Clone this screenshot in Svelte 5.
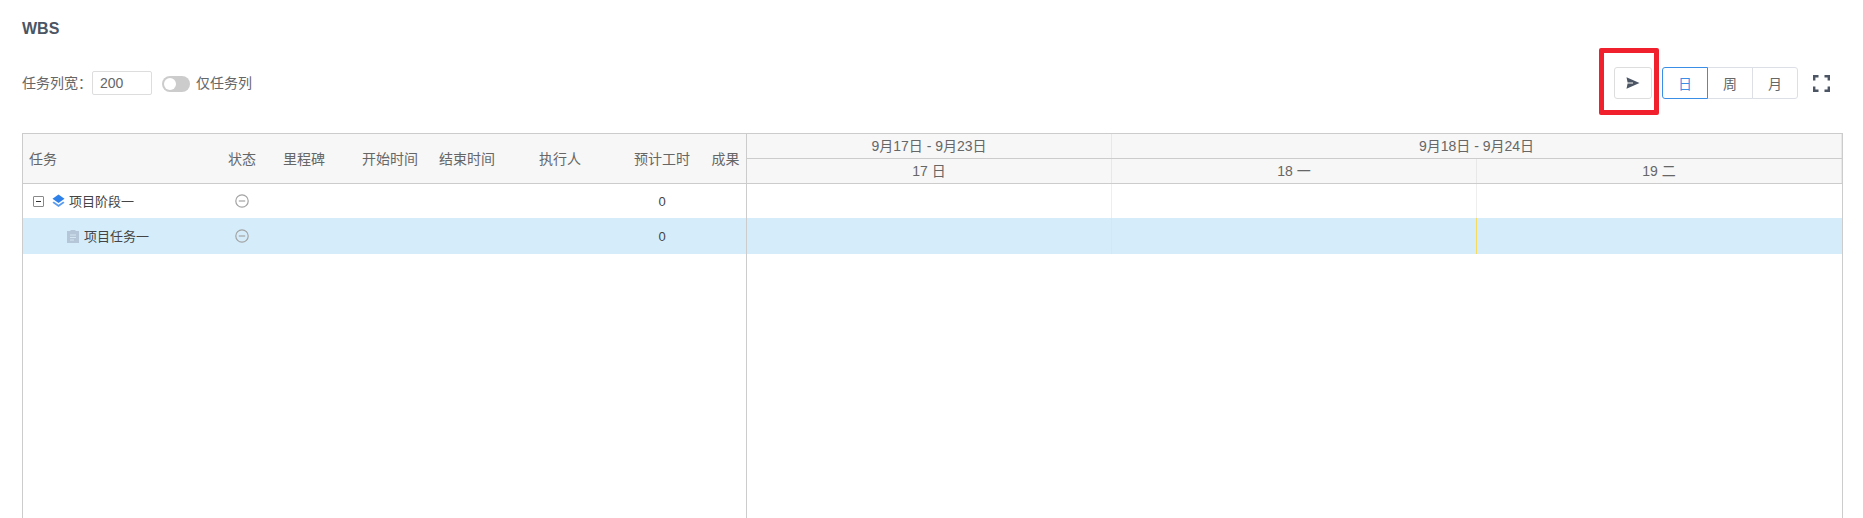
<script lang="ts">
  const columns = [
    { label: "任务", width: 201, align: "left" },
    { label: "状态", width: 36 },
    { label: "里程碑", width: 88 },
    { label: "开始时间", width: 84 },
    { label: "结束时间", width: 70 },
    { label: "执行人", width: 116 },
    { label: "预计工时", width: 88 },
    { label: "成果", width: 39 },
  ];

  const rows = [
    { name: "项目阶段一", type: "stage", hours: 0 },
    { name: "项目任务一", type: "task", hours: 0, selected: true },
  ];

  const weeks = ["9月17日 - 9月23日", "9月18日 - 9月24日"];
  const days = ["17 日", "18 一", "19 二"];
  const scales = ["日", "周", "月"];
</script>

<main class="page">
  <h1>WBS</h1>

  <div class="toolbar">
    <label class="field">
      <span>任务列宽：</span>
      <input value="200" />
    </label>
    <span class="switch"><i></i></span>
    <span class="switch-label">仅任务列</span>

    <div class="tools">
      <div class="marked">
        <button class="send" aria-label="发送">
          <svg width="14" height="12" viewBox="0 0 14 12"><path d="M0.5 0.3 13.5 6 0.5 11.7 1.6 6.5H7V5.5H1.6Z" fill="#4b5563" /></svg>
        </button>
      </div>
      <div class="scale">
        {#each scales as s, i}
          <button class:active={i === 0}>{s}</button>
        {/each}
      </div>
      <svg class="fullscreen" width="17" height="17" viewBox="0 0 17 17" fill="none" stroke="#4b5563" stroke-width="2.4">
        <path d="M1.2 5.5V1.2H5.5M11.5 1.2h4.3V5.5M15.8 11.5v4.3H11.5M5.5 15.8H1.2V11.5" />
      </svg>
    </div>
  </div>

  <div class="gantt">
    <div class="grid">
      <div class="grid-head">
        {#each columns as c}
          <div class="col" class:left={c.align === "left"} style:width="{c.width}px">{c.label}</div>
        {/each}
      </div>
      {#each rows as r}
        <div class="row" class:selected={r.selected}>
          <div class="cell-name">
            {#if r.type === "stage"}
              <span class="toggle"></span>
              <svg class="ico" width="13" height="14" viewBox="0 0 13 14">
                <path d="M6.5 0.5 12.5 4.8 6.5 9 0.5 4.8Z" fill="#2f80e8" />
                <path d="M1.8 7.6 6.5 10.8 11.2 7.6 12.5 8.7 6.5 13 0.5 8.7Z" fill="#5a9cf0" />
              </svg>
            {:else}
              <svg class="ico task" width="12" height="14" viewBox="0 0 12 14">
                <path d="M0 2h3.5V1h5v1H12v12H0Z" fill="#b4c6d8" />
                <path d="M3 6h6M3 8.5h6M3 11h4" stroke="#d5e6f2" stroke-width="1" />
              </svg>
            {/if}
            <span class="name">{r.name}</span>
          </div>
          <div class="cell-status">
            <svg width="14" height="14" viewBox="0 0 14 14" fill="none" stroke="#a3a3a3" stroke-width="1.2">
              <circle cx="7" cy="7" r="6.2" /><path d="M3.8 7h6.4" />
            </svg>
          </div>
          <div class="cell-hours">{r.hours}</div>
        </div>
      {/each}
    </div>

    <div class="chart">
      <div class="scale-row">
        {#each weeks as w, i}
          <div class="week" class:wide={i === 1}>{w}</div>
        {/each}
      </div>
      <div class="scale-row">
        {#each days as d}
          <div class="day">{d}</div>
        {/each}
      </div>
      {#each rows as r}
        <div class="track" class:selected={r.selected}>
          {#each days as d}
            <div class="track-cell"></div>
          {/each}
        </div>
      {/each}
    </div>
  </div>
</main>

<style>
  :global(body) {
    margin: 0;
    background: #fff;
  }
  .page {
    height: 518px;
    overflow: hidden;
    box-sizing: border-box;
    padding: 20px 0 0 22px;
    font-family: "Liberation Sans", "Noto Sans CJK SC", sans-serif;
    font-size: 14px;
    color: #666;
  }
  h1 {
    margin: 0;
    font-size: 16px;
    line-height: 18px;
    font-weight: 700;
    color: #4b5563;
  }
  .toolbar {
    display: flex;
    align-items: center;
    height: 36px;
    margin-top: 27px;
  }
  .field {
    display: flex;
    align-items: center;
  }
  .field span {
    margin-top: -2px;
  }
  input {
    width: 60px;
    height: 24px;
    box-sizing: border-box;
    border: 1px solid #ddd;
    border-radius: 2px;
    padding: 0 7px;
    font: inherit;
    color: #666;
  }
  .switch {
    width: 28px;
    height: 16px;
    margin: 2px 0 0 10px;
    border-radius: 8px;
    background: #ccc;
    position: relative;
  }
  .switch i {
    position: absolute;
    left: 2px;
    top: 2px;
    width: 12px;
    height: 12px;
    border-radius: 50%;
    background: #fff;
  }
  .switch-label {
    margin: -2px 0 0 6px;
  }
  .tools {
    margin-left: auto;
    margin-right: 33px;
    display: flex;
    align-items: center;
  }
  .marked {
    box-sizing: border-box;
    width: 60px;
    height: 67px;
    margin-top: -3px;
    padding: 3px 2px 0 0;
    border: 5px solid #f0202c;
    border-radius: 2px;
    display: flex;
    align-items: center;
    justify-content: flex-end;
  }
  button {
    font: inherit;
    color: #666;
    background: #fff;
    padding: 0;
  }
  .send {
    width: 38px;
    height: 32px;
    flex: none;
    border: 1px solid #ddd;
    border-radius: 3px;
    display: flex;
    align-items: center;
    justify-content: center;
  }
  .scale {
    display: flex;
    margin-left: 3px;
  }
  .scale button {
    width: 46px;
    height: 32px;
    border: 1px solid #dcdfe6;
    margin-left: -1px;
  }
  .scale button:first-child {
    border-radius: 3px 0 0 3px;
    margin-left: 0;
  }
  .scale button:last-child {
    border-radius: 0 3px 3px 0;
  }
  .scale button.active {
    border-color: #3a8ee6;
    color: #3a8ee6;
    position: relative;
  }
  .fullscreen {
    margin-left: 15px;
  }
  .gantt {
    display: flex;
    box-sizing: border-box;
    width: 1821px;
    height: 400px;
    margin-top: 32px;
    border: 1px solid #ccc;
  }
  .grid {
    width: 724px;
    flex: none;
    box-sizing: border-box;
    border-right: 1px solid #ccc;
  }
  .grid-head {
    display: flex;
    height: 49px;
    background: #f7f7f7;
    border-bottom: 1px solid #ccc;
  }
  .col {
    flex: none;
    display: flex;
    align-items: center;
    justify-content: center;
    white-space: nowrap;
    box-sizing: border-box;
    padding-bottom: 2px;
  }
  .col.left {
    justify-content: flex-start;
    padding-left: 6px;
  }
  .row {
    display: flex;
    align-items: center;
    height: 34px;
    color: #444;
    font-size: 13px;
  }
  .row.selected {
    height: 36px;
    background: #d5edfb;
  }
  .cell-name {
    width: 201px;
    box-sizing: border-box;
    padding-left: 10px;
    display: flex;
    align-items: center;
  }
  .selected .cell-name {
    padding-left: 44px;
  }
  .name {
    margin-top: -2px;
  }
  .toggle {
    width: 11px;
    height: 11px;
    box-sizing: border-box;
    border: 1px solid #888;
    border-radius: 1px;
    margin-right: 8px;
    position: relative;
  }
  .toggle::after {
    content: "";
    position: absolute;
    left: 2px;
    top: 4px;
    width: 5px;
    height: 1px;
    background: #333;
  }
  .ico {
    margin-right: 4px;
  }
  .ico.task {
    margin-right: 5px;
  }
  .cell-status {
    width: 36px;
    display: flex;
    justify-content: center;
  }
  .cell-hours {
    margin-left: 358px;
    width: 88px;
    text-align: center;
  }
  .chart {
    flex: 1;
    min-width: 0;
  }
  .scale-row {
    display: flex;
    height: 24px;
    background: #f7f7f7;
    border-bottom: 1px solid #ccc;
  }
  .week,
  .day {
    width: 365px;
    flex: none;
    box-sizing: border-box;
    text-align: center;
    line-height: 24px;
    border-right: 1px solid #e8e8e8;
  }
  .week.wide {
    width: 730px;
  }
  .track {
    display: flex;
    height: 34px;
  }
  .track.selected {
    height: 36px;
    background: #d5edfb;
  }
  .track-cell {
    width: 365px;
    flex: none;
    box-sizing: border-box;
    border-right: 1px solid #eee;
  }
  .track-cell:last-child {
    border-right: 0;
  }
  .track.selected .track-cell:nth-child(1) {
    border-right-color: #efe9a8;
  }
  .track.selected .track-cell:nth-child(2) {
    border-right-color: #f5dc60;
  }
</style>
